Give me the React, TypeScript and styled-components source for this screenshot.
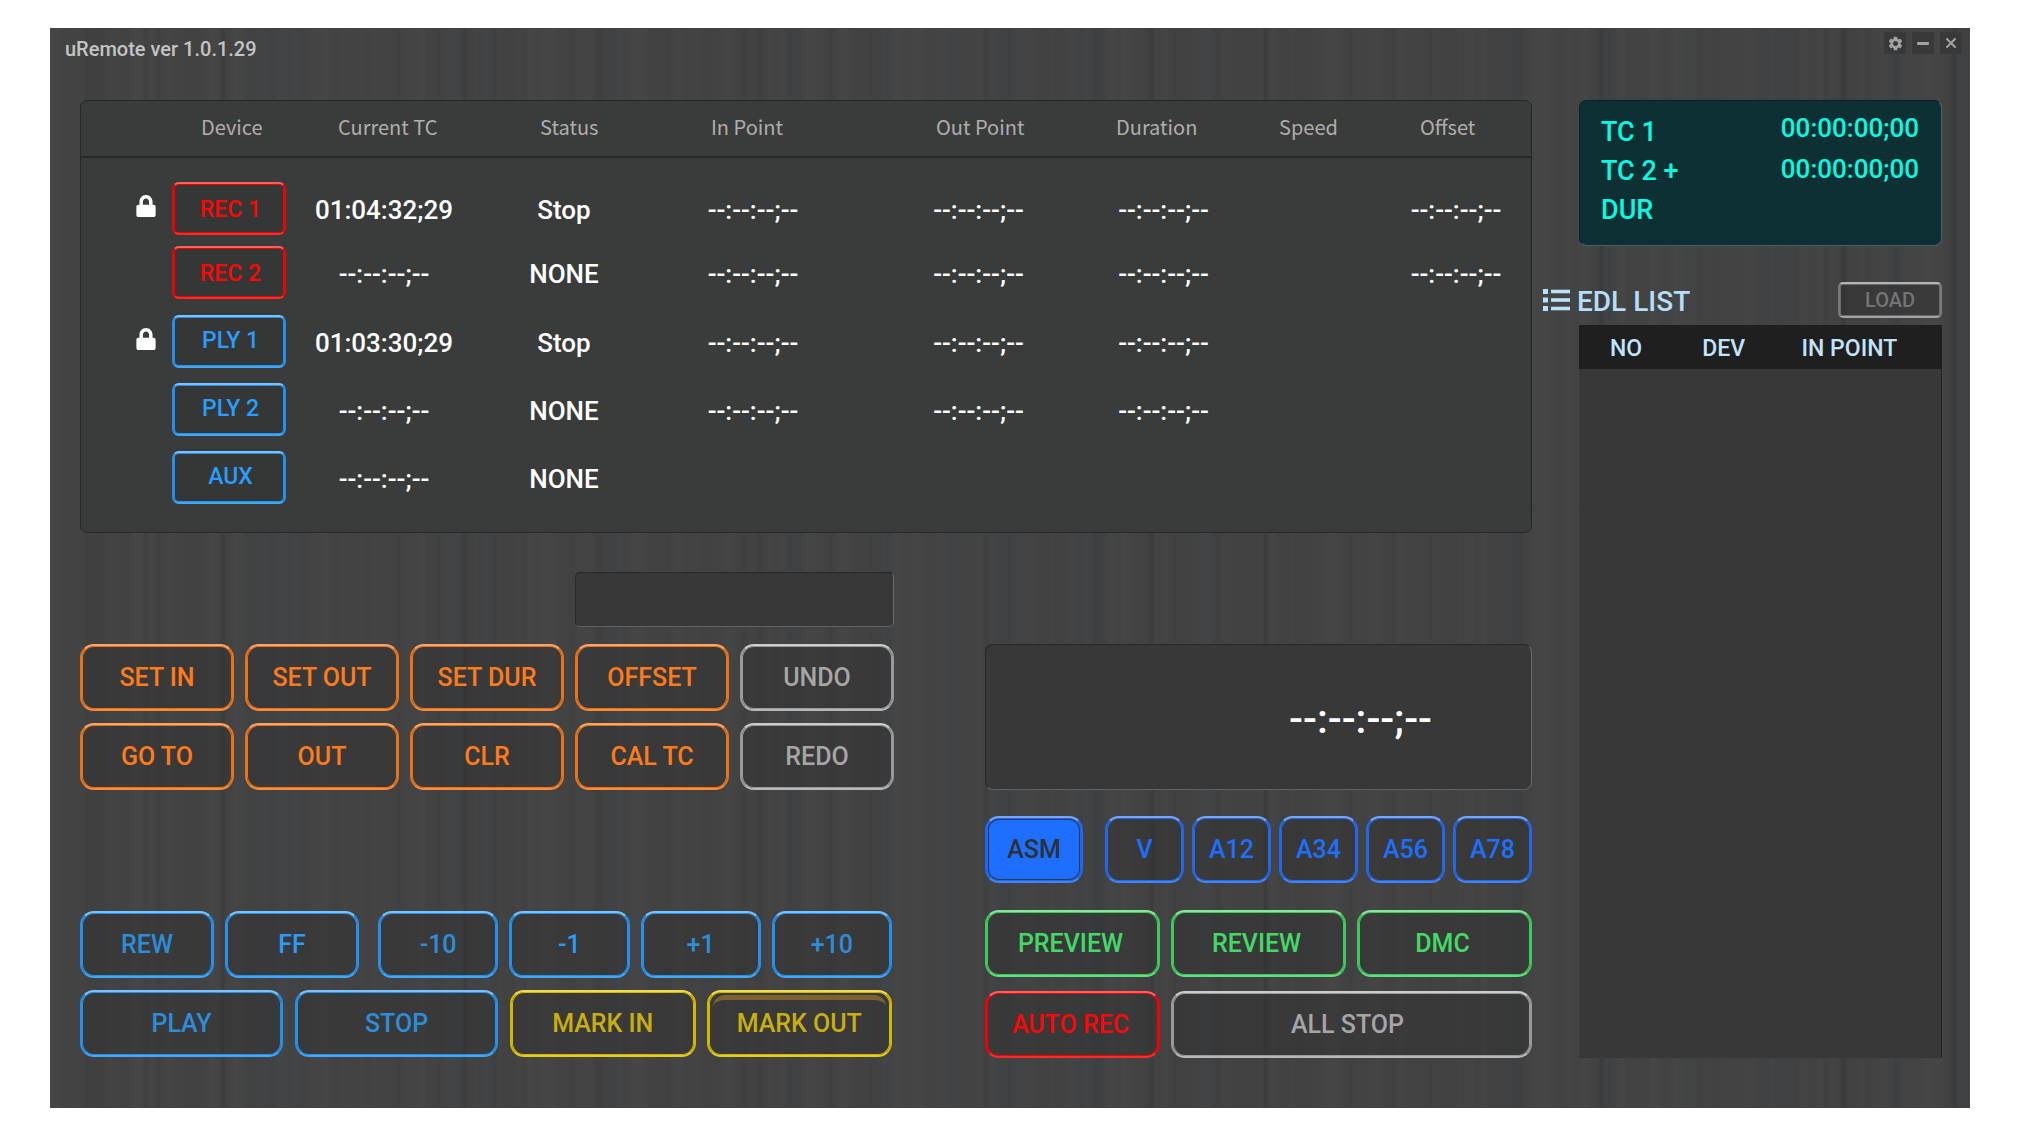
import React from "react";
import styled, { createGlobalStyle, css } from "styled-components";
import { FaLock } from "react-icons/fa";
import { MdSettings } from "react-icons/md";

const GlobalStyle = createGlobalStyle`
  *, *::before, *::after { box-sizing: border-box; }
  body {
    margin: 0;
    padding: 28px 50px;
    background: #ffffff;
    font-family: Roboto, "Liberation Sans", sans-serif;
    font-weight: 500;
  }
  button { font: inherit; cursor: pointer; }
`;

/* ---------- brushed metal backdrop ---------- */

const grooves = [9, 21.6, 57.4, 63.3, 80.8, 93.4, 99.2];

function brushedMetal(): string {
  let seed = 29;
  const next = () => {
    seed = (seed * 16807) % 2147483647;
    return seed / 2147483647;
  };
  const stops: string[] = [];
  const count = 320;
  const tints = [
    [1, 2, 1],
    [1, 2, 1],
    [2, 1, 1],
    [0, 1, 3],
  ];
  let tint = tints[0];
  for (let i = 0; i <= count; i += 1) {
    const at = (i / count) * 100;
    if (i % 3 === 0) {
      tint = tints[Math.floor(next() * tints.length)];
    }
    const level = 63 + Math.round(next() * 5);
    const [r, g, b] = tint.map((t) => level + t);
    stops.push(`rgb(${r},${g},${b}) ${at.toFixed(2)}%`);
  }
  const lines = grooves
    .map(
      (g) =>
        `transparent ${g - 0.2}%, rgba(30,32,32,0.22) ${g}%, transparent ${g + 0.2}%`
    )
    .join(", ");
  return `linear-gradient(90deg, ${lines}), linear-gradient(90deg, ${stops.join(", ")})`;
}

const metal = brushedMetal();

/* ---------- tones ---------- */

type Tone = "orange" | "gray" | "sky" | "yellow" | "blue" | "green" | "red";

const tones: Record<
  Tone,
  { text: string; dim: string; side: string; top: string; bottom: string }
> = {
  orange: { text: "#ff7b1b", dim: "#ff7b1b", side: "#e8731a", top: "#ffa568", bottom: "#ff8a38" },
  gray: { text: "#a6a6a6", dim: "#a6a6a6", side: "#9a9a9a", top: "#cccccc", bottom: "#b8b8b8" },
  sky: { text: "#2a9dfc", dim: "#2c8ddb", side: "#2591ec", top: "#7cc2ff", bottom: "#3fa8ff" },
  yellow: { text: "#cdb211", dim: "#c9ae12", side: "#d3b800", top: "#f0dc50", bottom: "#e2cb2c" },
  blue: { text: "#1f6fff", dim: "#1f6fff", side: "#2268ea", top: "#78a6ff", bottom: "#4284ff" },
  green: { text: "#43d966", dim: "#43d966", side: "#3ec95d", top: "#86e89c", bottom: "#5fe07d" },
  red: { text: "#fc0606", dim: "#fc0606", side: "#ec0404", top: "#ff6060", bottom: "#ff2a2a" },
};

const rim = css<{ $tone: Tone }>`
  border: 2px solid ${(p) => tones[p.$tone].side};
  border-top-color: ${(p) => tones[p.$tone].top};
  border-bottom-color: ${(p) => tones[p.$tone].bottom};
  box-shadow: inset 0 0 0 1px ${(p) => tones[p.$tone].side};
`;

/* ---------- window ---------- */

const Window = styled.div`
  background: ${metal};
  padding: 4px 8px 50px 15px;
`;

const TitleBar = styled.header`
  display: flex;
  justify-content: space-between;
  align-items: flex-start;
  margin-bottom: 32px;
`;

const Title = styled.h1`
  margin: 0;
  height: 36px;
  padding-top: 3px;
  font-size: 20px;
  line-height: 28px;
  font-weight: 500;
  color: #c4c4c4;
`;

const WindowButtons = styled.div`
  display: flex;
  gap: 6px;
`;

const WindowButton = styled.button`
  display: flex;
  align-items: center;
  justify-content: center;
  width: 22px;
  height: 22px;
  padding: 0;
  border: 0;
  background: #393939;
  color: #a3a3a3;
`;

const Body = styled.main`
  display: grid;
  grid-template-columns: minmax(0, 1452fr) minmax(0, 399fr);
  column-gap: 11px;
  padding: 0 20px 0 15px;
`;

const Workspace = styled.div`
  display: flex;
  flex-direction: column;
`;

/* ---------- device table ---------- */

const DevicePanel = styled.section`
  border: 1px solid #262727;
  border-radius: 7px;
  background: #3a3c3b;
`;

const DeviceTable = styled.table`
  display: flex;
  flex-direction: column;
  padding-bottom: 28px;
  border-spacing: 0;
`;

const DeviceHead = styled.thead`
  display: block;
  border-bottom: 2px solid #272828;
  margin-bottom: 24px;
`;

const HeadRow = styled.tr`
  display: grid;
  grid-template-columns: 120fr 137fr 202fr 171fr 225fr 180fr 163fr 141fr 111fr;
  height: 55px;
  align-items: center;
  padding-bottom: 4px;
`;

const HeadCell = styled.th`
  padding: 0;
  text-align: left;
  font-family: "Noto Sans CJK KR", "Noto Sans", sans-serif;
  font-size: 20px;
  line-height: 28px;
  font-weight: 400;
  color: #b0adad;
`;

const DeviceGroup = styled.tbody<{ $gap: number }>`
  display: flex;
  flex-direction: column;
  gap: ${(p) => p.$gap}px;
  & + & {
    margin-top: 16px;
  }
`;

const DeviceRow = styled.tr`
  display: grid;
  grid-template-columns: 91fr 114fr 196fr 164fr 214fr 237fr 133fr 151fr 150fr;
  align-items: center;
`;

const Cell = styled.td`
  padding: 0;
`;

const ValueCell = styled(Cell)`
  padding-top: 2px;
  text-align: center;
  font-size: 26px;
  line-height: 32px;
  color: #ffffff;
  white-space: nowrap;
`;

const LockCell = styled(Cell)`
  display: flex;
  justify-content: flex-end;
  padding: 0 15px 5px 0;
  color: #ffffff;
`;

const DeviceButton = styled.button<{ $tone: Tone }>`
  ${rim}
  display: block;
  width: 100%;
  height: 53px;
  padding: ${(p) => (p.$tone === "sky" ? "0 0 2px 3px" : "2px 0 0 3px")};
  border-radius: 7px;
  background: #353736;
  color: ${(p) => tones[p.$tone].text};
  font-size: 23px;
  line-height: 28px;
`;

/* ---------- control decks ---------- */

const Controls = styled.div`
  display: grid;
  grid-template-columns: minmax(0, 814fr) minmax(0, 547fr);
  column-gap: 91px;
  align-items: start;
  padding-top: 39px;
`;

const Deck = styled.section<{ $top?: number }>`
  display: flex;
  flex-direction: column;
  padding-top: ${(p) => p.$top ?? 0}px;
`;

const sunken = css`
  border: 1px solid #262727;
  border-right-color: #6a6a6a;
  border-bottom-color: #626262;
  background: #383838;
`;

const EditPad = styled.div`
  display: grid;
  grid-template-columns: repeat(5, minmax(0, 1fr));
  gap: 12px 11px;
  margin-bottom: 121px;
`;

const EntryDisplay = styled.output`
  ${sunken}
  grid-column: 4 / -1;
  height: 55px;
  margin-bottom: 5px;
  border-radius: 5px;
`;

const Rows = styled.div<{ $gap: number; $inset?: number }>`
  display: flex;
  flex-direction: column;
  gap: ${(p) => p.$gap}px;
  padding-right: ${(p) => p.$inset ?? 0}px;
`;

const Row = styled.div<{ $gap: number }>`
  display: flex;
  gap: ${(p) => p.$gap}px;
`;

const KeyGroup = styled.div<{ $grow: number; $gap: number }>`
  display: flex;
  flex: ${(p) => p.$grow} 1 0;
  gap: ${(p) => p.$gap}px;
  min-width: 0;
`;

const Key = styled.button<{ $tone: Tone; $dim?: boolean }>`
  ${rim}
  position: relative;
  flex: 1 1 0;
  min-width: 0;
  height: 67px;
  padding: 1px 0 0;
  border-radius: 14px;
  background: rgba(46, 46, 46, 0.42);
  color: ${(p) => (p.$dim ? tones[p.$tone].dim : tones[p.$tone].text)};
  font-size: 25px;
  line-height: 32px;
  white-space: nowrap;
`;

const GlintKey = styled(Key)`
  &::before {
    content: "";
    position: absolute;
    inset: 3px 4px auto 4px;
    height: 16px;
    border-top: 5px solid rgba(190, 140, 45, 0.5);
    border-radius: 12px 12px 0 0;
  }
`;

const RightKey = styled(Key)`
  padding-right: 4px;
`;

const ActiveKey = styled(Key)`
  background: #1f6fff;
  color: #2c3136;
  box-shadow: inset 0 0 0 1px #2268ea, inset 0 0 0 2px #2a3a5c;
`;

const DeckGrid = styled.div`
  display: grid;
  grid-template-columns: repeat(3, minmax(0, 1fr));
  gap: 14px 11px;
`;

const WideKey = styled(RightKey)`
  grid-column: span 2;
  padding-right: 8px;
`;

const Monitor = styled.output`
  ${sunken}
  display: flex;
  align-items: center;
  justify-content: flex-end;
  height: 146px;
  margin-bottom: 26px;
  padding: 4px 99px 0 0;
  border-radius: 8px;
  color: #ffffff;
  font-size: 41px;
  line-height: 48px;
`;

/* ---------- sidebar ---------- */

const Sidebar = styled.aside`
  display: flex;
  flex-direction: column;
`;

const TimePanel = styled.section`
  display: flex;
  justify-content: space-between;
  height: 146px;
  margin: 0 0 36px 36px;
  padding: 7px 22px 0 21px;
  border: 1px solid #0a2125;
  border-right-color: #4a6265;
  border-bottom-color: #4a6265;
  border-radius: 8px;
  background: #0d3035;
  color: #08fae0;
`;

const TimeLabels = styled.div`
  display: flex;
  flex-direction: column;
  padding-top: 5px;
  font-size: 27px;
  line-height: 39px;
`;

const TimeValues = styled.div`
  display: flex;
  flex-direction: column;
  font-size: 26px;
  line-height: 41px;
`;

const EdlBar = styled.div`
  display: flex;
  align-items: center;
  height: 36px;
  margin-bottom: 7px;
`;

const EdlTitle = styled.h2`
  flex: 1;
  margin: 0;
  padding: 4px 0 0 7px;
  font-size: 28px;
  line-height: 36px;
  font-weight: 500;
  color: #b4def9;
`;

const LoadButton = styled.button`
  width: 104px;
  height: 36px;
  padding: 0;
  border: 2px solid #7a7a7a;
  border-top-color: #b4b4b4;
  border-bottom-color: #a2a2a2;
  border-radius: 5px;
  box-shadow: inset 0 0 0 1px #6c6c6c;
  background: rgba(46, 46, 46, 0.42);
  color: #747474;
  font-size: 20px;
  line-height: 24px;
`;

const EdlTable = styled.table`
  display: flex;
  flex: 1;
  flex-direction: column;
  margin-left: 36px;
  border-spacing: 0;
`;

const EdlHead = styled.thead`
  display: block;
  background: #1f1f1f;
`;

const EdlHeadRow = styled.tr`
  display: grid;
  grid-template-columns: 92fr 99fr 140fr;
  align-items: center;
  height: 44px;
  padding: 4px 0 0 31px;
`;

const EdlHeadCell = styled.th`
  padding: 0;
  text-align: left;
  font-size: 23px;
  line-height: 28px;
  font-weight: 500;
  color: #c2e4fc;
`;

const EdlBody = styled.tbody`
  display: block;
  flex: 1;
  border-right: 1px solid #202020;
  background: #383838;
`;

/* ---------- icons ---------- */

const MinusIcon = () => (
  <svg width="12" height="12" viewBox="0 0 12 12" aria-hidden="true">
    <rect x="0" y="5" width="12" height="3" rx="1" fill="currentColor" />
  </svg>
);

const CloseIcon = () => (
  <svg width="12" height="12" viewBox="0 0 12 12" aria-hidden="true">
    <path
      d="M2 2L10 10M10 2L2 10"
      fill="none"
      stroke="currentColor"
      strokeWidth="2"
      strokeLinecap="round"
    />
  </svg>
);

const ListIcon = () => (
  <svg width="27" height="22" viewBox="0 0 27 22" fill="#b9e1fa" aria-hidden="true">
    {[0, 8.5, 17].map((y) => (
      <g key={y}>
        <rect x="0" y={y} width="5" height="5" />
        <rect x="8" y={y + 0.7} width="19" height="3.6" />
      </g>
    ))}
  </svg>
);

/* ---------- data ---------- */

const BLANK = "--:--:--;--";

interface Device {
  name: string;
  tone: Tone;
  locked?: boolean;
  cells: string[];
}

const headings = [
  "", "Device", "Current TC", "Status", "In Point", "Out Point", "Duration", "Speed", "Offset",
];

const recorders: Device[] = [
  { name: "REC 1", tone: "red", locked: true, cells: ["01:04:32;29", "Stop", BLANK, BLANK, BLANK, "", BLANK] },
  { name: "REC 2", tone: "red", cells: [BLANK, "NONE", BLANK, BLANK, BLANK, "", BLANK] },
];

const players: Device[] = [
  { name: "PLY 1", tone: "sky", locked: true, cells: ["01:03:30;29", "Stop", BLANK, BLANK, BLANK, "", ""] },
  { name: "PLY 2", tone: "sky", cells: [BLANK, "NONE", BLANK, BLANK, BLANK, "", ""] },
  { name: "AUX", tone: "sky", cells: [BLANK, "NONE", "", "", "", "", ""] },
];

const editKeys: [string, Tone][] = [
  ["SET IN", "orange"], ["SET OUT", "orange"], ["SET DUR", "orange"], ["OFFSET", "orange"], ["UNDO", "gray"],
  ["GO TO", "orange"], ["OUT", "orange"], ["CLR", "orange"], ["CAL TC", "orange"], ["REDO", "gray"],
];

const DeviceRows = ({ devices }: { devices: Device[] }) => (
  <>
    {devices.map((d) => (
      <DeviceRow key={d.name}>
        <LockCell>{d.locked && <FaLock size={22} title="Locked" />}</LockCell>
        <Cell>
          <DeviceButton type="button" $tone={d.tone}>{d.name}</DeviceButton>
        </Cell>
        {d.cells.map((text, i) => (
          <ValueCell key={i}>{text}</ValueCell>
        ))}
      </DeviceRow>
    ))}
  </>
);

export default function App() {
  return (
    <>
      <GlobalStyle />
      <Window>
        <TitleBar>
          <Title>uRemote ver 1.0.1.29</Title>
          <WindowButtons>
            <WindowButton type="button" aria-label="Settings"><MdSettings size={17} /></WindowButton>
            <WindowButton type="button" aria-label="Minimize"><MinusIcon /></WindowButton>
            <WindowButton type="button" aria-label="Close"><CloseIcon /></WindowButton>
          </WindowButtons>
        </TitleBar>
        <Body>
          <Workspace>
            <DevicePanel>
              <DeviceTable>
                <DeviceHead>
                  <HeadRow>
                    {headings.map((h) => (
                      <HeadCell key={h} scope="col">{h}</HeadCell>
                    ))}
                  </HeadRow>
                </DeviceHead>
                <DeviceGroup $gap={11}><DeviceRows devices={recorders} /></DeviceGroup>
                <DeviceGroup $gap={15}><DeviceRows devices={players} /></DeviceGroup>
              </DeviceTable>
            </DevicePanel>
            <Controls>
              <Deck>
                <EditPad>
                  <EntryDisplay aria-label="Entry" />
                  {editKeys.map(([label, tone]) => (
                    <Key key={label} type="button" $tone={tone}>{label}</Key>
                  ))}
                </EditPad>
                <Rows $gap={12} $inset={2}>
                  <Row $gap={19}>
                    <KeyGroup $grow={279} $gap={11}>
                      <Key type="button" $tone="sky" $dim>REW</Key>
                      <Key type="button" $tone="sky">FF</Key>
                    </KeyGroup>
                    <KeyGroup $grow={514} $gap={11}>
                      <Key type="button" $tone="sky" $dim>-10</Key>
                      <Key type="button" $tone="sky">-1</Key>
                      <Key type="button" $tone="sky" $dim>+1</Key>
                      <Key type="button" $tone="sky" $dim>+10</Key>
                    </KeyGroup>
                  </Row>
                  <Row $gap={12}>
                    <KeyGroup $grow={418} $gap={12}>
                      <Key type="button" $tone="sky" $dim>PLAY</Key>
                      <Key type="button" $tone="sky" $dim>STOP</Key>
                    </KeyGroup>
                    <KeyGroup $grow={382} $gap={11}>
                      <Key type="button" $tone="yellow" $dim>MARK IN</Key>
                      <GlintKey type="button" $tone="yellow" $dim>MARK OUT</GlintKey>
                    </KeyGroup>
                  </Row>
                </Rows>
              </Deck>
              <Deck $top={72}>
                <Monitor aria-label="Timecode">{BLANK}</Monitor>
                <Rows $gap={27}>
                  <Row $gap={22}>
                    <KeyGroup $grow={98} $gap={8}>
                      <ActiveKey type="button" aria-pressed="true" $tone="blue">ASM</ActiveKey>
                    </KeyGroup>
                    <KeyGroup $grow={427} $gap={8}>
                      {["V", "A12", "A34", "A56", "A78"].map((t) => (
                        <Key key={t} type="button" $tone="blue">{t}</Key>
                      ))}
                    </KeyGroup>
                  </Row>
                  <DeckGrid>
                    <RightKey type="button" $tone="green">PREVIEW</RightKey>
                    <RightKey type="button" $tone="green">REVIEW</RightKey>
                    <RightKey type="button" $tone="green">DMC</RightKey>
                    <RightKey type="button" $tone="red">AUTO REC</RightKey>
                    <WideKey type="button" $tone="gray">ALL STOP</WideKey>
                  </DeckGrid>
                </Rows>
              </Deck>
            </Controls>
          </Workspace>
          <Sidebar>
            <TimePanel>
              <TimeLabels>
                <span>TC 1</span>
                <span>TC 2 +</span>
                <span>DUR</span>
              </TimeLabels>
              <TimeValues>
                <span>00:00:00;00</span>
                <span>00:00:00;00</span>
              </TimeValues>
            </TimePanel>
            <EdlBar>
              <ListIcon />
              <EdlTitle>EDL LIST</EdlTitle>
              <LoadButton type="button">LOAD</LoadButton>
            </EdlBar>
            <EdlTable>
              <EdlHead>
                <EdlHeadRow>
                  <EdlHeadCell scope="col">NO</EdlHeadCell>
                  <EdlHeadCell scope="col">DEV</EdlHeadCell>
                  <EdlHeadCell scope="col">IN POINT</EdlHeadCell>
                </EdlHeadRow>
              </EdlHead>
              <EdlBody />
            </EdlTable>
          </Sidebar>
        </Body>
      </Window>
    </>
  );
}
